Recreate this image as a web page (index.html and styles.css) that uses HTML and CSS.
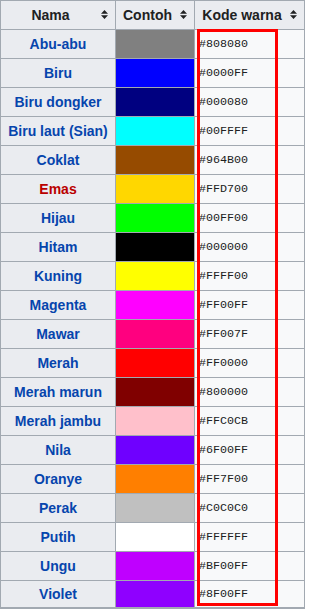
FILE: index.html
```html
<!DOCTYPE html>
<html lang="id">
<head>
<meta charset="utf-8">
<title>Warna</title>
<link rel="stylesheet" href="styles.css">
</head>
<body>
<div class="wrap">
  <div class="grid">
    <div class="hd">Nama<svg class="sort" viewBox="0 0 7 9" width="7" height="9"><path d="M3.5 0 7 3.8H0Z M0 5.2H7L3.5 9Z" fill="#202122"/></svg></div>
    <div class="hd">Contoh<svg class="sort" viewBox="0 0 7 9" width="7" height="9"><path d="M3.5 0 7 3.8H0Z M0 5.2H7L3.5 9Z" fill="#202122"/></svg></div>
    <div class="hd">Kode warna<svg class="sort" viewBox="0 0 7 9" width="7" height="9"><path d="M3.5 0 7 3.8H0Z M0 5.2H7L3.5 9Z" fill="#202122"/></svg></div>

    <div class="name">Abu-abu</div><div class="sw" style="background:#808080"></div><div class="code">#808080</div>
    <div class="name">Biru</div><div class="sw" style="background:#0000FF"></div><div class="code">#0000FF</div>
    <div class="name">Biru dongker</div><div class="sw" style="background:#000080"></div><div class="code">#000080</div>
    <div class="name">Biru laut (Sian)</div><div class="sw" style="background:#00FFFF"></div><div class="code">#00FFFF</div>
    <div class="name">Coklat</div><div class="sw" style="background:#964B00"></div><div class="code">#964B00</div>
    <div class="name new">Emas</div><div class="sw" style="background:#FFD700"></div><div class="code">#FFD700</div>
    <div class="name">Hijau</div><div class="sw" style="background:#00FF00"></div><div class="code">#00FF00</div>
    <div class="name">Hitam</div><div class="sw" style="background:#000000"></div><div class="code">#000000</div>
    <div class="name">Kuning</div><div class="sw" style="background:#FFFF00"></div><div class="code">#FFFF00</div>
    <div class="name">Magenta</div><div class="sw" style="background:#FF00FF"></div><div class="code">#FF00FF</div>
    <div class="name">Mawar</div><div class="sw" style="background:#FF007F"></div><div class="code">#FF007F</div>
    <div class="name">Merah</div><div class="sw" style="background:#FF0000"></div><div class="code">#FF0000</div>
    <div class="name">Merah marun</div><div class="sw" style="background:#800000"></div><div class="code">#800000</div>
    <div class="name">Merah jambu</div><div class="sw" style="background:#FFC0CB"></div><div class="code">#FFC0CB</div>
    <div class="name">Nila</div><div class="sw" style="background:#6F00FF"></div><div class="code">#6F00FF</div>
    <div class="name">Oranye</div><div class="sw" style="background:#FF7F00"></div><div class="code">#FF7F00</div>
    <div class="name">Perak</div><div class="sw" style="background:#C0C0C0"></div><div class="code">#C0C0C0</div>
    <div class="name">Putih</div><div class="sw" style="background:#FFFFFF"></div><div class="code">#FFFFFF</div>
    <div class="name">Ungu</div><div class="sw" style="background:#BF00FF"></div><div class="code">#BF00FF</div>
    <div class="name last">Violet</div><div class="sw last" style="background:#8F00FF"></div><div class="code last">#8F00FF</div>
  </div>
  <div class="highlight"></div>
</div>
</body>
</html>
```
FILE: styles.css
```css
html, body {
  margin: 0;
  padding: 0;
  background: #ffffff;
}
.wrap {
  position: relative;
  width: 305px;
}
.grid {
  display: grid;
  grid-template-columns: 114px 78px 109px;
  grid-auto-rows: 28px;
  gap: 1px;
  padding: 1px 1px 0 1px;
  background: #a2a9b1;
  border-bottom: 1px solid #3a3a3a;
  font-family: "Liberation Sans", Arial, sans-serif;
  font-size: 14px;
  color: #202122;
}
.hd {
  background: #eaecf0;
  font-weight: bold;
  position: relative;
  display: flex;
  align-items: center;
  justify-content: center;
  padding: 0 21px 0 6px;
  white-space: nowrap;
}
.sort {
  position: absolute;
  right: 7px;
  top: 9px;
}
.name {
  background: #eaecf0;
  font-weight: bold;
  color: #0645ad;
  display: flex;
  align-items: center;
  justify-content: center;
  white-space: nowrap;
}
.name.new {
  color: #ba0000;
}
.code {
  background: #f8f9fa;
  font-family: "Liberation Mono", "Courier New", monospace;
  font-size: 11.7px;
  display: flex;
  align-items: center;
  padding-left: 4px;
}
.last {
  height: 26px;
}
.highlight {
  position: absolute;
  left: 197px;
  top: 29px;
  width: 75px;
  height: 571px;
  border: 3px solid #ff0000;
}
```
